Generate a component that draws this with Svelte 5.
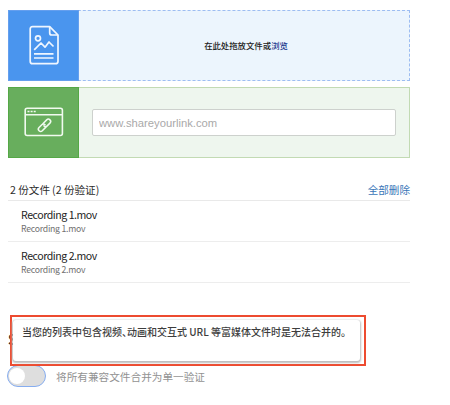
<script>
  const files = ['Recording 1.mov', 'Recording 2.mov'];
  let merge = $state(false);
</script>

<main>
  <section class="drop">
    <div class="tile blue">
      <svg width="32" height="42" viewBox="0 0 32 42" fill="none" stroke="#eff6ff" stroke-width="1.7" stroke-linejoin="round">
        <path d="M3.5 1.7H20.7L29 10V36.2Q29 38.7 26.5 38.7H3.5Q1.2 38.7 1.2 36.2V4Q1.2 1.7 3.5 1.7Z" />
        <path d="M20.7 1.7V8Q20.7 10 22.7 10H29" />
        <circle cx="9" cy="13.3" r="2.5" />
        <path d="M5.2 24.8L12 18L16 22.2L20 17L24.5 21.5M5 28.9H24.5M5 33H24.5" />
      </svg>
    </div>
    <div class="drop-text"><span>在此处拖放文件或<a href="#browse">浏览</a></span></div>
  </section>

  <section class="link">
    <div class="tile green">
      <svg width="40" height="30" viewBox="0 0 40 30" fill="none" stroke="#f1faef" stroke-width="1.6">
        <rect x="1.2" y="1.2" width="37.2" height="27.3" rx="2" />
        <path d="M1.2 7.8H38.4" />
        <path d="M3.5 4.5H12" stroke-width="1.6" stroke-dasharray="2 1.1" />
        <g transform="translate(20.5 18.3) rotate(-45)" stroke-width="1.5" stroke-linecap="round">
          <path d="M-.3 2.3H-5.4A2.3 2.3 0 0 1-5.4-2.3H-1.5A2.3 2.3 0 0 1 .8 0" />
          <path d="M.3-2.3H5.4A2.3 2.3 0 0 1 5.4 2.3H1.5A2.3 2.3 0 0 1-.8 0" />
        </g>
      </svg>
    </div>
    <div class="field"><input placeholder="www.shareyourlink.com" aria-label="URL" /></div>
  </section>

  <header>
    <span>2 份文件<span class="paren">(2 份验证)</span></span>
    <a href="#clear">全部删除</a>
  </header>
  <ul>
    {#each files as file}
      <li>
        <strong>{file}</strong>
        <small>{file}</small>
      </li>
    {/each}
  </ul>

  <footer>
    <div class="label">S</div>
    <div class="merge">
      <button class:on={merge} aria-label="合并" onclick={() => (merge = !merge)}><i></i></button>
      <span>将所有兼容文件合并为单一验证</span>
    </div>
    <div class="callout">
      <div class="tip">当您的列表中包含视频<span class="comma">、</span>动画和交互式 URL 等富媒体文件时是无法合并的。</div>
    </div>
  </footer>
</main>

<style>
  :global(body) { background: #fff; }
  main {
    box-sizing: border-box;
    width: 450px;
    height: 405px;
    padding: 10px 40px 0 8px;
    overflow: hidden;
    font-family: "Noto Sans CJK SC", sans-serif;
    color: #2c2c2c;
  }
  section {
    display: flex;
    box-sizing: border-box;
    height: 71px;
    width: 402px;
  }
  .drop { border: 1px dashed #9dbdf2; background: #ecf5fd; margin-bottom: 6px; }
  .link { border: 1px solid #c2dab3; background: #eef6ee; }
  .tile {
    display: flex;
    align-items: center;
    justify-content: center;
    width: 71px;
    margin: -1px 0 -1px -1px;
    box-sizing: border-box;
    flex: none;
  }
  .blue { background: #4a95ee; border: 1px solid #659fee; }
  .blue svg { margin-left: 2px; }
  .green { background: #68ae5d; border: 1px solid #55a846; }
  .green svg { margin-bottom: 2px; }
  .drop-text {
    flex: 1;
    display: flex;
    align-items: center;
    justify-content: center;
    padding: 0 0 2px 4px;
    font-size: 8.4px;
    font-weight: 500;
    color: #222;
  }
  .drop-text a { color: #15368c; text-decoration: none; }
  .field { flex: 1; display: flex; align-items: center; padding: 0 13px; }
  input {
    box-sizing: border-box;
    width: 100%;
    height: 27px;
    padding: 0 6px;
    border: 1px solid #cdd1cd;
    border-radius: 2px;
    background: #fff;
    font: 11.25px "Liberation Sans", sans-serif;
    outline: none;
  }
  input::placeholder { color: #a9a9a9; opacity: 1; }
  header {
    display: flex;
    justify-content: space-between;
    align-items: center;
    width: 402px;
    box-sizing: border-box;
    height: 43px;
    padding: 21px 0 0 2px;
    border-bottom: 1px solid #e9e9e9;
    font-size: 10.6px;
  }
  .paren { margin-left: 2px; }
  header a { color: #3a76b8; text-decoration: none; }
  ul { margin: 0; padding: 0; list-style: none; width: 402px; }
  li {
    display: flex;
    flex-direction: column;
    box-sizing: border-box;
    height: 41px;
    padding: 6px 0 0 13px;
    border-bottom: 1px solid #ededed;
  }
  strong { font-size: 10.6px; line-height: 15px; font-weight: 400; letter-spacing: -.47px; color: #222; }
  small { font-size: 8.7px; line-height: 13px; letter-spacing: -.25px; color: #707070; }
  footer { position: relative; height: 120px; }
  .label { padding-top: 47px; height: 18px; font-size: 14px; line-height: 18px; font-weight: 700; }
  .merge {
    display: flex;
    align-items: center;
    gap: 10px;
    margin: 17px 0 0 -1px;
    font-size: 10.65px;
    color: #929292;
  }
  button {
    box-sizing: border-box;
    width: 39px;
    height: 22px;
    padding: 1px;
    border: 1.5px solid #86adf0;
    border-radius: 11px;
    background: #dedede;
    display: flex;
    align-items: center;
  }
  button.on { justify-content: flex-end; }
  i { width: 16px; height: 16px; border-radius: 50%; background: #fff; }
  .callout {
    position: absolute;
    left: 2px;
    top: 32px;
    box-sizing: border-box;
    width: 356px;
    height: 51px;
    border: 2px solid #ed4b30;
    padding: 3px 4px 3px 1px;
  }
  .tip {
    box-sizing: border-box;
    height: 41px;
    padding: 4px 0 0 9px;
    border-radius: 3px;
    background: #fff;
    box-shadow: 0 1px 2px 1px #bcbcbc;
    font-size: 10px;
    line-height: 16px;
    font-weight: 500;
    color: #3d3d3d;
    white-space: nowrap;
  }
  .comma { font-feature-settings: "halt"; }
</style>
